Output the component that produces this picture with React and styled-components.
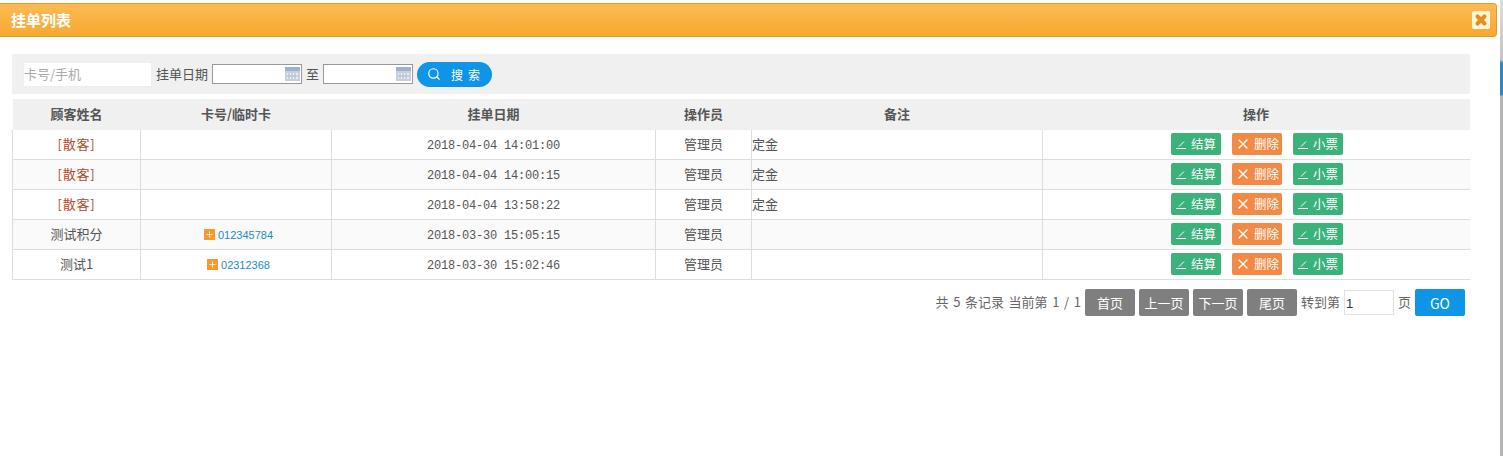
import React from "react";
import styled, { createGlobalStyle } from "styled-components";
import { Search, X, Plus } from "lucide-react";

const GlobalStyle = createGlobalStyle`
  html, body { margin: 0; padding: 0; background: #fff; }
  body {
    font-family: "Noto Sans CJK SC", "Liberation Sans", sans-serif;
    font-size: 12px;
    color: #555;
    overflow: hidden;
  }
`;

const Page = styled.div`
  width: 1503px;
  height: 456px;
  box-sizing: border-box;
  display: flex;
  justify-content: space-between;
`;

const Dialog = styled.div`
  width: 1497px;
  margin-top: 3px;
`;

const SideStrip = styled.div`
  width: 3px;
  height: 100%;
  background: linear-gradient(#dcdcdc 0, #c4c4c4 60px, #2f86c0 63px, #2f86c0 95px, #b4b4b4 96px);
`;

const TitleBar = styled.div`
  height: 34px;
  box-sizing: border-box;
  display: flex;
  align-items: center;
  justify-content: space-between;
  padding: 0 6px 0 11px;
  background: linear-gradient(#fdbb55, #fab040 55%, #f8a92f);
  border: 1px solid #e49a2b;
  border-left: 0;
  border-radius: 0 4px 4px 0;
`;

const Title = styled.div`
  font-size: 15px;
  font-weight: 700;
  color: #fff;
  margin-bottom: 2px;
`;

const CloseButton = styled.div`
  width: 18px;
  height: 18px;
  display: flex;
  align-items: center;
  justify-content: center;
  background: #fff6dc;
  border-radius: 2px;
  color: #e88d1a;
`;

const Content = styled.div`
  padding: 17px 27px 0 12px;
`;

const Toolbar = styled.div`
  height: 40px;
  background: #f0f0f0;
  border-radius: 2px;
  display: flex;
  align-items: center;
  padding-left: 11px;
  font-size: 13px;
  color: #555;
`;

const KeywordInput = styled.div`
  width: 129px;
  height: 25px;
  margin-top: 1px;
  box-sizing: border-box;
  background: #fff;
  border: 1px solid #eee;
  color: #aaa;
  font-size: 13px;
  line-height: 21px;
`;

const Label = styled.span`
  margin-left: ${(p) => p.$left || 0}px;
  margin-bottom: 2px;
`;

const DateInput = styled.div`
  width: 90px;
  height: 20px;
  margin-left: ${(p) => p.$left}px;
  box-sizing: border-box;
  background: #fff;
  border: 1px solid #999;
  display: flex;
  justify-content: flex-end;
  align-items: center;
  padding-right: 1px;
`;

const SearchButton = styled.div`
  width: 75px;
  height: 25px;
  margin-left: 4px;
  padding-left: 10px;
  box-sizing: border-box;
  border-radius: 13px;
  background: #0f95e8;
  color: #fff;
  font-size: 12px;
  display: flex;
  align-items: center;
  gap: 10px;
  letter-spacing: 5px;
`;

const Table = styled.table`
  width: 1457px;
  margin-top: 5px;
  border-collapse: collapse;
  table-layout: fixed;
`;

const Th = styled.th`
  height: 29px;
  padding: 0 0 2px;
  background: #f0f0f0;
  font-size: 13px;
  font-weight: 700;
  color: #555;
`;

const Row = styled.tr`
  background: ${(p) => (p.$odd ? "#fafafa" : "#fff")};
`;

const Td = styled.td`
  height: 27px;
  padding: 0 0 2px;
  border: 1px solid #ddd;
  border-top: 0;
  font-size: 13px;
  color: #555;
  text-align: ${(p) => p.$align || "center"};

  &:last-child {
    border-right: 0;
  }
`;

const Guest = styled.span`
  color: #b5492a;
  letter-spacing: 0.8px;
`;

const Mono = styled.span`
  font-family: "Liberation Mono", monospace;
  font-size: 12px;
  letter-spacing: -0.2px;
`;

const CardLink = styled.span`
  display: inline-flex;
  align-items: center;
  gap: 3px;
  margin-left: 5px;
  color: #1a8cc8;
  font-family: "Liberation Sans", sans-serif;
  font-size: 11px;
`;

const PlusBox = styled.span`
  width: 11px;
  height: 11px;
  display: inline-flex;
  align-items: center;
  justify-content: center;
  background: #f79a2e;
  color: #fff;
`;

const Actions = styled.div`
  display: flex;
  gap: 11px;
  padding-left: 128px;
`;

const ActionButton = styled.div`
  width: 50px;
  height: 22px;
  border-radius: 2px;
  background: ${(p) => p.$bg};
  color: #fff;
  font-size: 12.5px;
  display: flex;
  align-items: center;
  justify-content: center;
  gap: 3px;
`;

const Pager = styled.div`
  width: 1453px;
  height: 27px;
  margin-top: 9px;
  display: flex;
  justify-content: flex-end;
  align-items: center;
  font-size: 13px;
  color: #666;
`;

const PagerInfo = styled.span`
  word-spacing: 1.7px;
  margin-bottom: 2px;
`;

const PageButton = styled.div`
  width: 50px;
  height: 27px;
  margin-left: 4px;
  border-radius: 2px;
  background: ${(p) => p.$bg || "#7f7f7f"};
  color: #fff;
  font-size: ${(p) => p.$size || 13}px;
  display: flex;
  align-items: center;
  justify-content: center;
`;

const PageInput = styled.div`
  width: 50px;
  height: 25px;
  margin: 0 4px;
  box-sizing: border-box;
  background: #fff;
  border: 1px solid #e2e2e2;
  color: #333;
  font-family: "Liberation Sans", sans-serif;
  font-size: 13px;
  line-height: 25px;
  padding-left: 1px;
`;

const CalendarIcon = () => (
  <svg width="15" height="14" viewBox="0 0 15 14">
    <rect width="15" height="14" fill="#c5cfe0" />
    <rect y="0" width="15" height="4" fill="#9fb0cb" />
    <rect x="2" y="6" width="11" height="6" fill="#e9edf4" />
    <path d="M4 6v6M7 6v6M10 6v6M2 9h11" stroke="#aab6ca" strokeWidth="1" />
  </svg>
);

const PenIcon = () => (
  <svg width="12" height="12" viewBox="0 0 12 12" fill="none" stroke="#fff" strokeWidth="1">
    <path d="M0 10.5h10M3 8.5l5-5" />
  </svg>
);

const rows = [
  { name: "[散客]", guest: true, date: "2018-04-04 14:01:00", note: "定金" },
  { name: "[散客]", guest: true, date: "2018-04-04 14:00:15", note: "定金" },
  { name: "[散客]", guest: true, date: "2018-04-04 13:58:22", note: "定金" },
  { name: "测试积分", card: "012345784", date: "2018-03-30 15:05:15" },
  { name: "测试1", card: "02312368", date: "2018-03-30 15:02:46" },
];

export default function App() {
  return (
    <Page>
      <GlobalStyle />
      <Dialog>
        <TitleBar>
          <Title>挂单列表</Title>
          <CloseButton>
            <X size={14} strokeWidth={7} />
          </CloseButton>
        </TitleBar>
        <Content>
          <Toolbar>
            <KeywordInput>卡号/手机</KeywordInput>
            <Label $left={4}>挂单日期</Label>
            <DateInput $left={4}>
              <CalendarIcon />
            </DateInput>
            <Label $left={4}>至</Label>
            <DateInput $left={4}>
              <CalendarIcon />
            </DateInput>
            <SearchButton>
              <Search size={14} />
              <span>搜索</span>
            </SearchButton>
          </Toolbar>
          <Table>
            <colgroup>
              <col width="128" />
              <col width="191" />
              <col width="324" />
              <col width="96" />
              <col width="291" />
              <col width="427" />
            </colgroup>
            <thead>
              <tr>
                <Th>顾客姓名</Th>
                <Th>卡号/临时卡</Th>
                <Th>挂单日期</Th>
                <Th>操作员</Th>
                <Th>备注</Th>
                <Th>操作</Th>
              </tr>
            </thead>
            <tbody>
              {rows.map((row, i) => (
                <Row key={i} $odd={i % 2 === 1}>
                  <Td>{row.guest ? <Guest>{row.name}</Guest> : row.name}</Td>
                  <Td>
                    {row.card && (
                      <CardLink>
                        <PlusBox>
                          <Plus size={9} strokeWidth={2} />
                        </PlusBox>
                        {row.card}
                      </CardLink>
                    )}
                  </Td>
                  <Td>
                    <Mono>{row.date}</Mono>
                  </Td>
                  <Td>管理员</Td>
                  <Td $align="left">{row.note}</Td>
                  <Td>
                    <Actions>
                      <ActionButton $bg="#3cb27b">
                        <PenIcon />
                        结算
                      </ActionButton>
                      <ActionButton $bg="#f28a45">
                        <X size={16} />
                        删除
                      </ActionButton>
                      <ActionButton $bg="#3cb27b">
                        <PenIcon />
                        小票
                      </ActionButton>
                    </Actions>
                  </Td>
                </Row>
              ))}
            </tbody>
          </Table>
          <Pager>
            <PagerInfo>共 5 条记录 当前第 1 / 1</PagerInfo>
            <PageButton>首页</PageButton>
            <PageButton>上一页</PageButton>
            <PageButton>下一页</PageButton>
            <PageButton>尾页</PageButton>
            <Label $left={4}>转到第</Label>
            <PageInput>1</PageInput>
            <Label>页</Label>
            <PageButton $bg="#0f95e8" $size={14}>GO</PageButton>
          </Pager>
        </Content>
      </Dialog>
      <SideStrip />
    </Page>
  );
}
